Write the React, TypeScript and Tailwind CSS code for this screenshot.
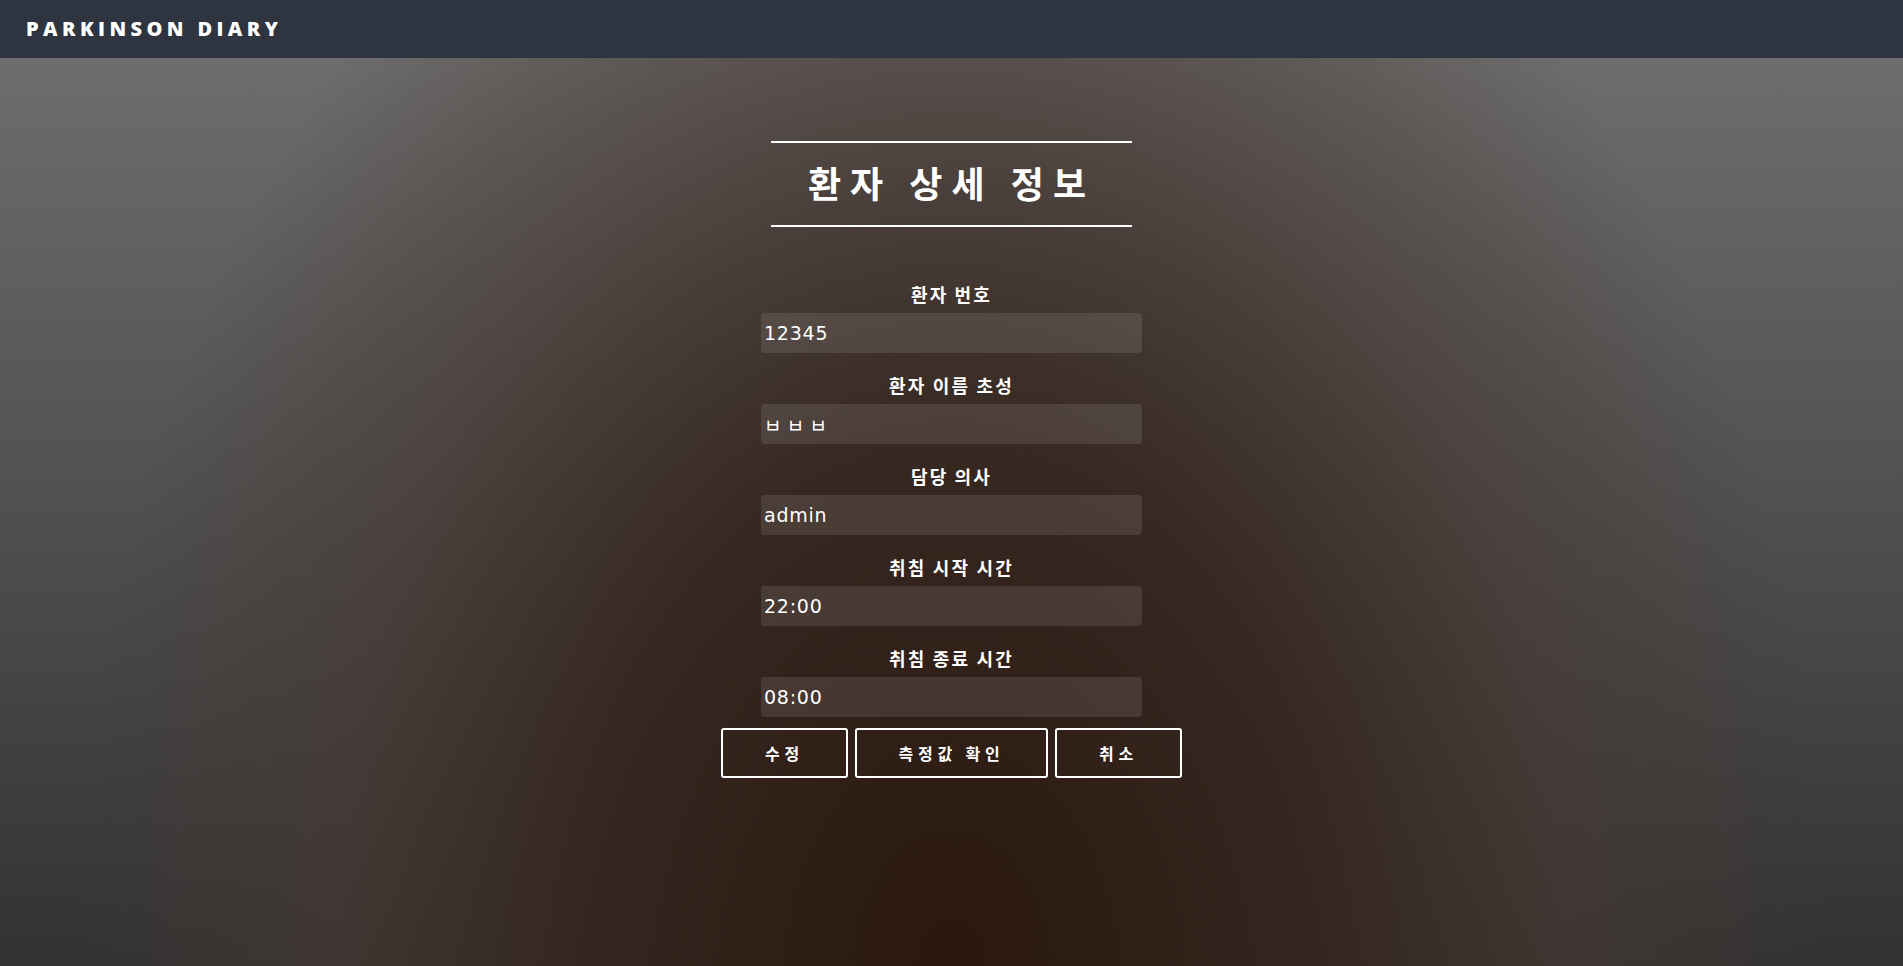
import React from "react";

const fields=[
{label:"환자 번호",value:"12345"},
{label:"환자 이름 초성",value:"ㅂㅂㅂ",cjk:true},
{label:"담당 의사",value:"admin"},
{label:"취침 시작 시간",value:"22:00"},
{label:"취침 종료 시간",value:"08:00"}
];

const kr="font-['Noto_Sans_CJK_KR','Noto_Sans',sans-serif]";

export default function App(){

return(

<div className="min-h-screen flex flex-col">

<header className="h-[58px] shrink-0 flex items-center px-[26px] bg-[#2e3440]">

<h1 className="font-['Open_Sans',sans-serif] text-[20px] font-extrabold tracking-[0.22em] text-white">
PARKINSON DIARY
</h1>

</header>

<main className="flex-1 flex flex-col items-center pt-[83px] bg-[radial-gradient(ellipse_46%_140%_at_50%_100%,rgba(42,24,16,1)_0%,rgba(52,36,28,0.92)_40%,rgba(70,56,50,0.6)_70%,rgba(0,0,0,0)_100%),linear-gradient(to_bottom,#6d6d6d,#323232)]">

<div className="w-[361px] h-[86px] border-y-2 border-white flex items-center justify-center pb-[4px]">

<h2 className={`${kr} text-[36px] font-bold tracking-[0.25em] text-white leading-none`}>
환자 상세 정보
</h2>

</div>

<form className="mt-[55px] flex flex-col items-center gap-[20px]">

{fields.map((f)=>(

<div key={f.label} className="flex flex-col items-center">

<label className={`${kr} h-[25px] leading-[25px] text-[18px] font-bold tracking-[0.12em] text-white mb-[6px]`}>
{f.label}
</label>

<input
readOnly
defaultValue={f.value}
className={`w-[381px] h-[40px] rounded-[4px] bg-white/10 px-[3px] ${f.cjk?"font-['Noto_Sans_CJK_KR',sans-serif] tracking-[0.28em]":"font-['DejaVu_Sans','Noto_Sans_CJK_KR',sans-serif] tracking-[0.04em]"} text-[19px] text-white outline-none`}
/>

</div>

))}

</form>

<div className="mt-[11px] flex gap-[7px]">

{[
{t:"수정",w:"w-[127px]"},
{t:"측정값 확인",w:"w-[193px]"},
{t:"취소",w:"w-[127px]"}
].map((b)=>(

<button
key={b.t}
className={`${b.w} ${kr} h-[50px] rounded-[3px] border-2 border-white text-[16px] font-bold tracking-[0.3em] text-white`}
>
{b.t}
</button>

))}

</div>

</main>

</div>

);

}
